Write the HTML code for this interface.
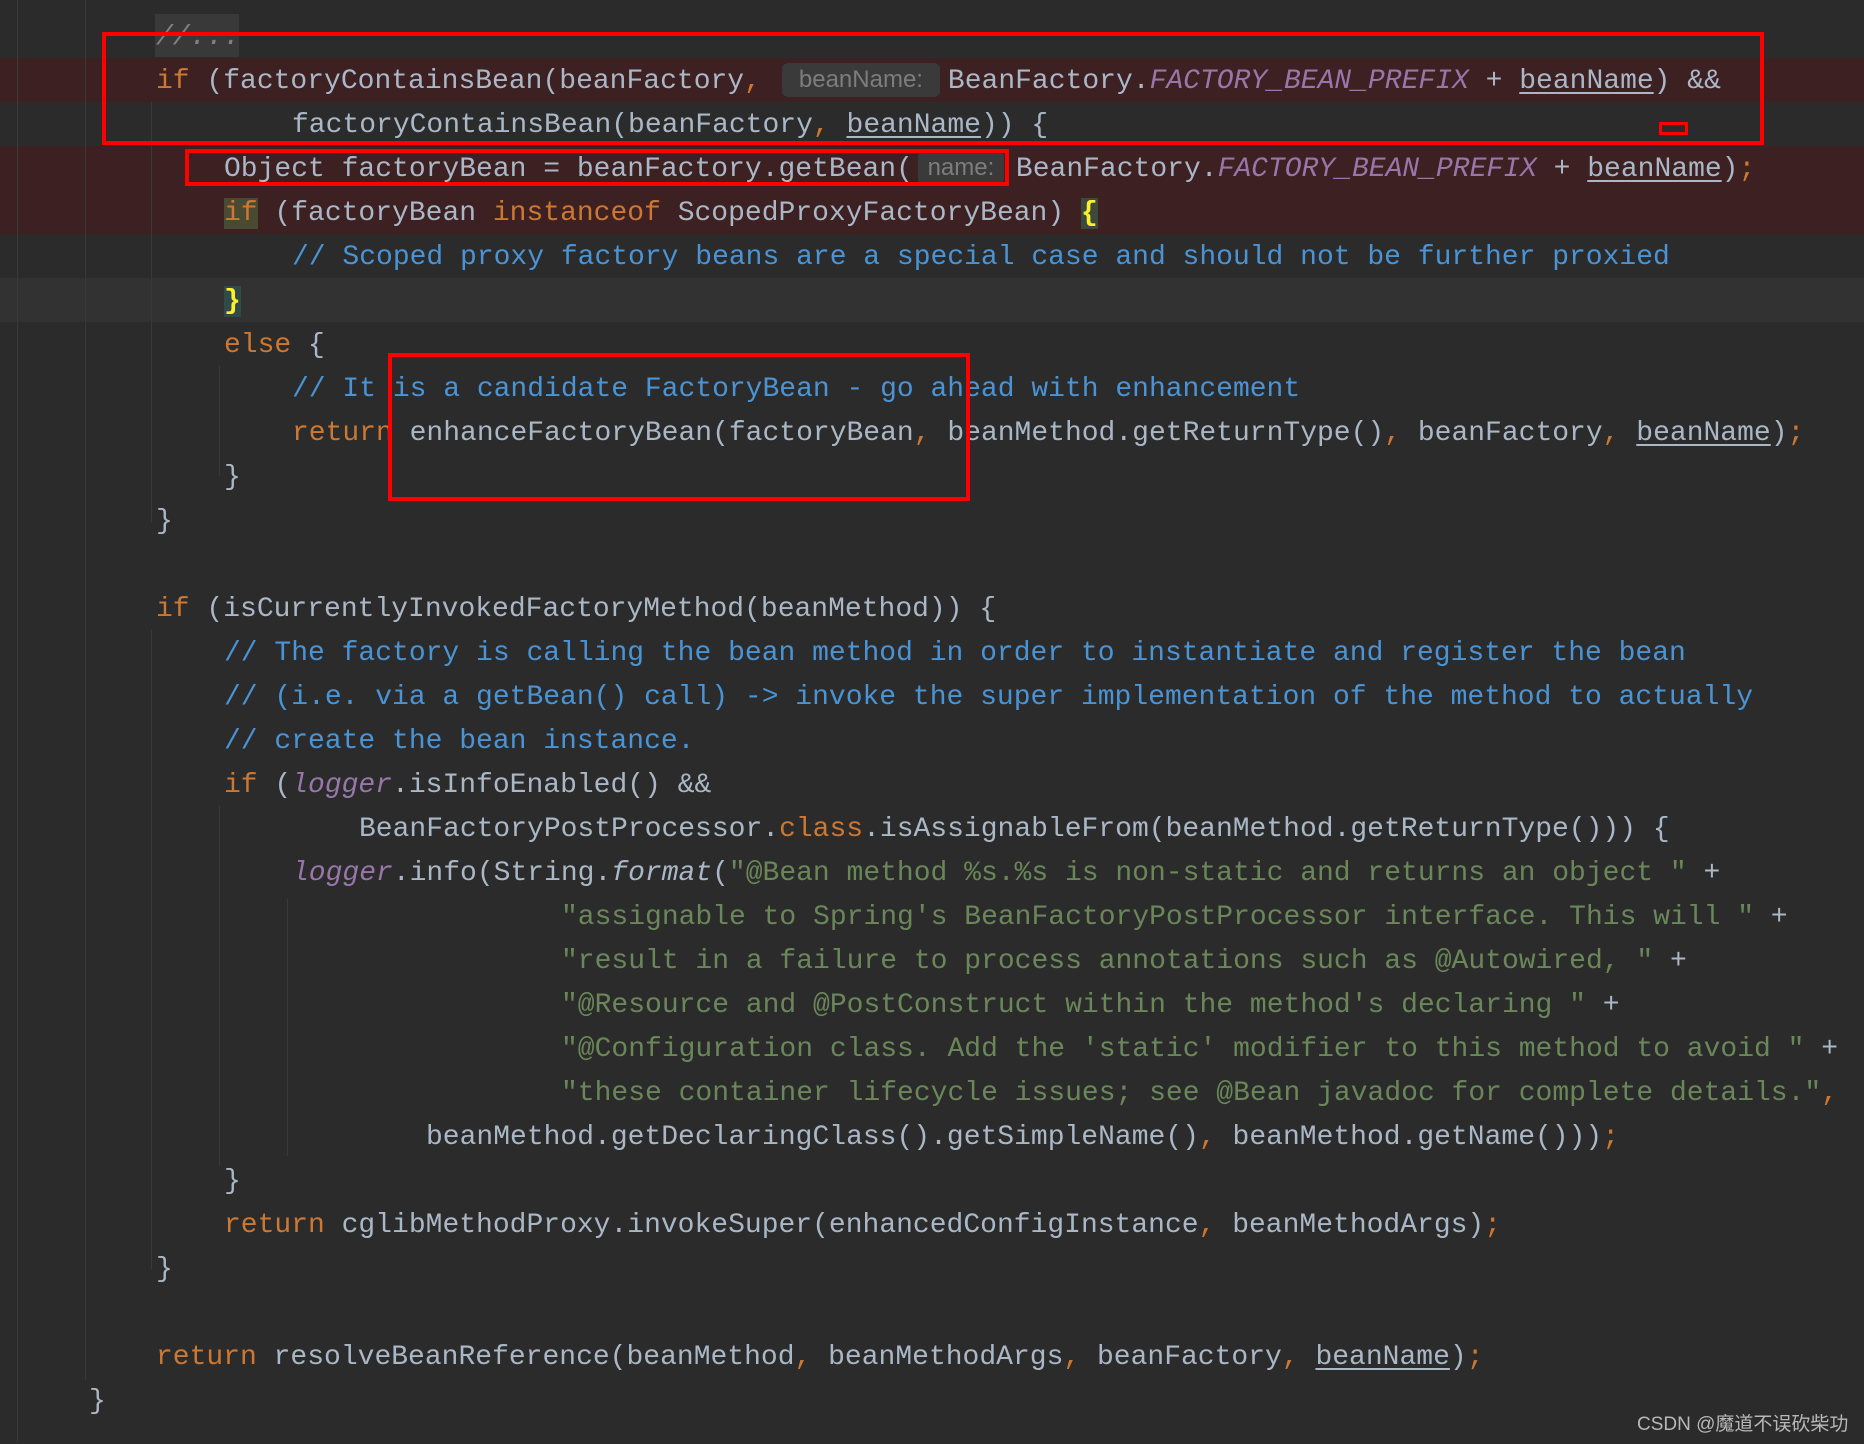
<!DOCTYPE html>
<html><head><meta charset="utf-8"><style>
html,body{margin:0;padding:0;}
body{width:1864px;height:1442px;background:#2b2b2b;position:relative;overflow:hidden;font-family:"Liberation Mono",monospace;font-size:28px;color:#a9b7c6;}
.row{position:absolute;left:0;width:1864px;height:44px;}
.red{background:#3c2022;}
.cur{background:#323232;}
.t{position:absolute;left:0;top:2px;width:1864px;height:1442px;}
.l{position:absolute;height:44px;line-height:44px;white-space:pre;}
.k{color:#cc7832;}
.c{color:#4a94d6;}
.s{color:#6a8759;}
.p{color:#9876aa;font-style:italic;}
.i{font-style:italic;}
.u{text-decoration:underline;text-underline-offset:4px;}
.g{color:#808080;font-style:italic;}
.hint{display:inline-block;font-family:"Liberation Sans",sans-serif;font-size:24px;color:#7d7d7d;background:#3a3a3a;border-radius:6px;height:34px;line-height:34px;vertical-align:middle;text-align:center;position:relative;top:-1px;}
.guide{position:absolute;width:1px;background:#393939;}
.box{position:absolute;border:4px solid #ff0000;box-sizing:border-box;}
.wm{position:absolute;left:1637px;top:1409px;font-family:"Liberation Sans","Noto Sans CJK SC",sans-serif;font-size:19px;color:#b8b8b8;white-space:nowrap;}
</style></head><body>
<div class="row red" style="top:58px"></div>
<div class="row red" style="top:146px;height:88px"></div>
<div class="row cur" style="top:278px"></div>

<div class="guide" style="left:17px;top:0;height:1442px"></div>
<div class="guide" style="left:85px;top:0;height:1380px"></div>
<div class="guide" style="left:151px;top:102px;height:420px"></div>
<div class="guide" style="left:151px;top:630px;height:640px"></div>
<div class="guide" style="left:219px;top:366px;height:110px"></div>
<div class="guide" style="left:219px;top:806px;height:360px"></div>
<div class="guide" style="left:287px;top:898px;height:258px"></div>

<div style="position:absolute;left:155px;top:14px;width:84px;height:43px;background:#393939"></div>
<div class="t">
<div class="l g" style="left:156px;top:14px">//...</div>
<div class="l" style="left:156px;top:58px"><span class="k">if</span> (factoryContainsBean(beanFactory<span class="k">,</span><span class="hint" style="margin-left:21px;width:158px;margin-right:8px">beanName:</span>BeanFactory.<span class="p">FACTORY_BEAN_PREFIX</span> + <span class="u">beanName</span>) &amp;&amp;</div>
<div class="l" style="left:292px;top:102px">factoryContainsBean(beanFactory<span class="k">,</span> <span class="u">beanName</span>)) {</div>
<div class="l" style="left:224px;top:146px">Object factoryBean = beanFactory.getBean(<span class="hint" style="margin-left:5px;width:86px;margin-right:12px">name:</span>BeanFactory.<span class="p">FACTORY_BEAN_PREFIX</span> + <span class="u">beanName</span>)<span class="k">;</span></div>
<div class="l" style="left:224px;top:190px"><span class="k" style="background:#4a4a33">if</span> (factoryBean <span class="k">instanceof</span> ScopedProxyFactoryBean) <span style="color:#ffef28;font-weight:bold;background:#3b4a3a">{</span></div>
<div class="l c" style="left:292px;top:234px">// Scoped proxy factory beans are a special case and should not be further proxied</div>
<div class="l" style="left:224px;top:278px"><span style="color:#ffef28;font-weight:bold;background:#2f4a48">}</span></div>
<div class="l" style="left:224px;top:322px"><span class="k">else</span> {</div>
<div class="l c" style="left:292px;top:366px">// It is a candidate FactoryBean - go ahead with enhancement</div>
<div class="l" style="left:292px;top:410px"><span class="k">return</span> enhanceFactoryBean(factoryBean<span class="k">,</span> beanMethod.getReturnType()<span class="k">,</span> beanFactory<span class="k">,</span> <span class="u">beanName</span>)<span class="k">;</span></div>
<div class="l" style="left:224px;top:454px">}</div>
<div class="l" style="left:156px;top:498px">}</div>
<div class="l" style="left:156px;top:586px"><span class="k">if</span> (isCurrentlyInvokedFactoryMethod(beanMethod)) {</div>
<div class="l c" style="left:224px;top:630px">// The factory is calling the bean method in order to instantiate and register the bean</div>
<div class="l c" style="left:224px;top:674px">// (i.e. via a getBean() call) -&gt; invoke the super implementation of the method to actually</div>
<div class="l c" style="left:224px;top:718px">// create the bean instance.</div>
<div class="l" style="left:224px;top:762px"><span class="k">if</span> (<span class="p">logger</span>.isInfoEnabled() &amp;&amp;</div>
<div class="l" style="left:359px;top:806px">BeanFactoryPostProcessor.<span class="k">class</span>.isAssignableFrom(beanMethod.getReturnType())) {</div>
<div class="l" style="left:292px;top:850px"><span class="p">logger</span>.info(String.<span class="i">format</span>(<span class="s">"@Bean method %s.%s is non-static and returns an object "</span> +</div>
<div class="l s" style="left:561px;top:894px">"assignable to Spring's BeanFactoryPostProcessor interface. This will " <span style="color:#a9b7c6">+</span></div>
<div class="l s" style="left:561px;top:938px">"result in a failure to process annotations such as @Autowired, " <span style="color:#a9b7c6">+</span></div>
<div class="l s" style="left:561px;top:982px">"@Resource and @PostConstruct within the method's declaring " <span style="color:#a9b7c6">+</span></div>
<div class="l s" style="left:561px;top:1026px">"@Configuration class. Add the 'static' modifier to this method to avoid " <span style="color:#a9b7c6">+</span></div>
<div class="l s" style="left:561px;top:1070px">"these container lifecycle issues; see @Bean javadoc for complete details."<span class="k">,</span></div>
<div class="l" style="left:426px;top:1114px">beanMethod.getDeclaringClass().getSimpleName()<span class="k">,</span> beanMethod.getName()))<span class="k">;</span></div>
<div class="l" style="left:224px;top:1158px">}</div>
<div class="l" style="left:224px;top:1202px"><span class="k">return</span> cglibMethodProxy.invokeSuper(enhancedConfigInstance<span class="k">,</span> beanMethodArgs)<span class="k">;</span></div>
<div class="l" style="left:156px;top:1246px">}</div>
<div class="l" style="left:156px;top:1334px"><span class="k">return</span> resolveBeanReference(beanMethod<span class="k">,</span> beanMethodArgs<span class="k">,</span> beanFactory<span class="k">,</span> <span class="u">beanName</span>)<span class="k">;</span></div>
<div class="l" style="left:89px;top:1378px">}</div>
</div>

<div class="box" style="left:102px;top:32px;width:1662px;height:113px"></div>
<div class="box" style="left:185px;top:149px;width:824px;height:37px"></div>
<div class="box" style="left:388px;top:353px;width:582px;height:148px"></div>
<div class="box" style="left:1659px;top:122px;width:29px;height:13px;border-width:3px"></div>

<div class="wm">CSDN @魔道不误砍柴功</div>
</body></html>
